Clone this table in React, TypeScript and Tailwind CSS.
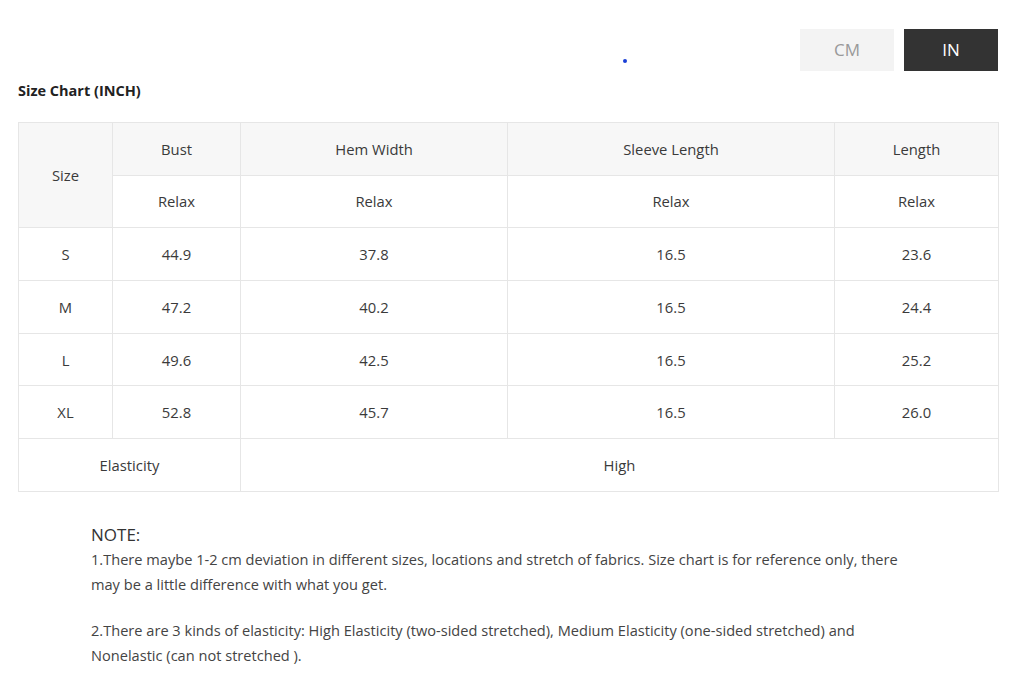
import React, { useState } from 'react';

type Unit = 'CM' | 'IN';

const rows = [
  { size: 'S', bust: '44.9', hem: '37.8', sleeve: '16.5', length: '23.6' },
  { size: 'M', bust: '47.2', hem: '40.2', sleeve: '16.5', length: '24.4' },
  { size: 'L', bust: '49.6', hem: '42.5', sleeve: '16.5', length: '25.2' },
  { size: 'XL', bust: '52.8', hem: '45.7', sleeve: '16.5', length: '26.0' },
];

const cell = 'border border-[#e6e6e6] h-[52.7px] p-0 text-center align-middle font-normal';

export default function App() {
  const [unit, setUnit] = useState<Unit>('IN');

  return (
    <div className="w-[1024px] h-[680px] bg-white text-[#333] overflow-hidden" style={{ fontFamily: '"Open Sans", sans-serif' }}>
      <div className="flex justify-end gap-[10px] pt-[29px] pr-[26px] relative">
        <span className="absolute left-[623px] top-[59px] w-[4px] h-[4px] rounded-full bg-[#1a3fd6]" />
        <button
          onClick={() => setUnit('CM')}
          className={`w-[94px] h-[42px] text-[17px] ${unit === 'CM' ? 'bg-[#333] text-white' : 'bg-[#f3f3f3] text-[#999]'}`}
        >
          CM
        </button>
        <button
          onClick={() => setUnit('IN')}
          className={`w-[94px] h-[42px] text-[17px] ${unit === 'IN' ? 'bg-[#333] text-white' : 'bg-[#f3f3f3] text-[#999]'}`}
        >
          IN
        </button>
      </div>

      <h2 className="ml-[18px] mt-[10px] text-[14.5px] font-bold leading-[20px] text-[#222]">Size Chart (INCH)</h2>

      <table className="ml-[18px] mt-[21px] w-[980px] border-collapse table-fixed text-[14.8px] text-[#3a3a3a]">
        <colgroup>
          <col className="w-[94px]" />
          <col className="w-[128px]" />
          <col className="w-[267px]" />
          <col className="w-[327px]" />
          <col className="w-[164px]" />
        </colgroup>
        <thead>
          <tr className="bg-[#f7f7f7]">
            <th rowSpan={2} className={cell}>Size</th>
            <th className={cell}>Bust</th>
            <th className={cell}>Hem Width</th>
            <th className={cell}>Sleeve Length</th>
            <th className={cell}>Length</th>
          </tr>
          <tr>
            <th className={cell}>Relax</th>
            <th className={cell}>Relax</th>
            <th className={cell}>Relax</th>
            <th className={cell}>Relax</th>
          </tr>
        </thead>
        <tbody>
          {rows.map((r) => (
            <tr key={r.size}>
              <td className={cell}>{r.size}</td>
              <td className={cell}>{r.bust}</td>
              <td className={cell}>{r.hem}</td>
              <td className={cell}>{r.sleeve}</td>
              <td className={cell}>{r.length}</td>
            </tr>
          ))}
          <tr>
            <td colSpan={2} className={cell}>Elasticity</td>
            <td colSpan={3} className={cell}>High</td>
          </tr>
        </tbody>
      </table>

      <div className="ml-[91px] mt-[31px] w-[822px] text-[#444]">
        <p className="text-[17px] leading-[24px] text-[#333]">NOTE:</p>
        <p className="text-[14.6px] leading-[25px]">
          1.There maybe 1-2 cm deviation in different sizes, locations and stretch of fabrics. Size chart is for reference only, there may be a little difference with what you get.
        </p>
        <p className="mt-[21px] text-[14.6px] leading-[25px]">
          2.There are 3 kinds of elasticity: High Elasticity (two-sided stretched), Medium Elasticity (one-sided stretched) and Nonelastic (can not stretched ).
        </p>
      </div>
    </div>
  );
}
